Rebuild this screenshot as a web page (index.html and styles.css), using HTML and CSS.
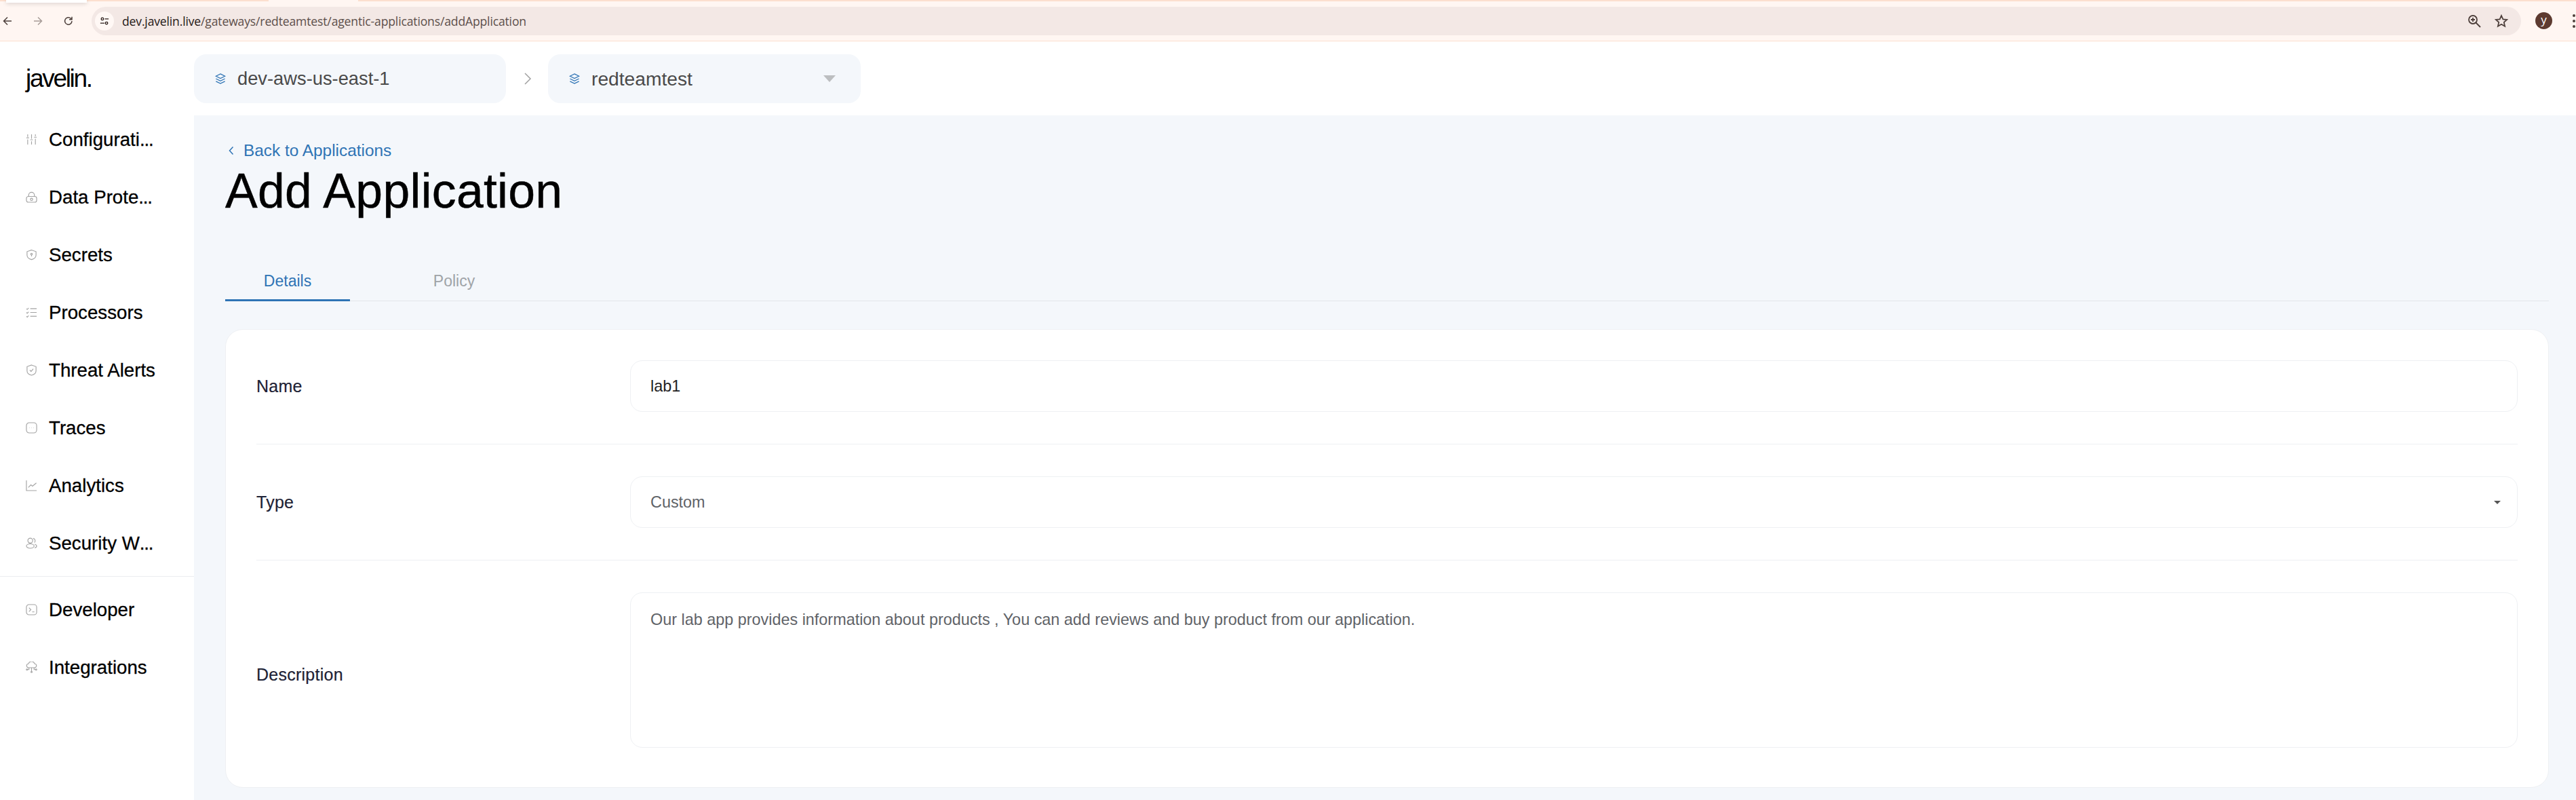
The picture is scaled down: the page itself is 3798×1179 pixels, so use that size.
FILE: index.html
```html
<!DOCTYPE html>
<html lang="en">
<head>
<meta charset="utf-8">
<title>Add Application</title>
<link rel="stylesheet" href="styles.css">
</head>
<body>
<div class="page">
  <div class="tabstrip"><div class="tab-active"></div><div class="tab-gap"></div></div>
  <header class="toolbar">
    <svg class="tb-icon" viewBox="0 0 16 16"><path d="M14 8H2.500M8 2.500 2.500 8 8 13.500"/></svg>
    <svg class="tb-icon tb-off" viewBox="0 0 16 16"><path d="M2 8h11.500M8 2.500 13.500 8 8 13.500"/></svg>
    <svg class="tb-icon" viewBox="0 0 16 16"><path d="M13 8a5.200 5.200 0 1 1-1.600-3.800L13 5.800M13 1.800v4H9"/></svg>
    <div class="omnibox">
      <span class="site-info"><svg viewBox="0 0 16 16"><circle cx="4.500" cy="4.500" r="2"/><circle cx="11.500" cy="11.500" r="2"/><path d="M8.500 4.500H15M1 11.500h7"/></svg></span>
      <span class="url"><span class="url-host">dev.javelin.live</span>/gateways/redteamtest/agentic-applications/addApplication</span>
      <svg class="omni-icon" viewBox="0 0 20 20"><circle cx="8" cy="8" r="6"/><path d="M12.500 12.500 19 19M5 8h6M8 5v6"/></svg>
      <svg class="omni-icon" viewBox="0 0 20 20"><path d="m10 2 2.400 5.400 5.800.6-4.400 3.900 1.300 5.800L10 14.700l-5.100 3 1.300-5.800L1.800 8l5.800-.6z"/></svg>
    </div>
    <span class="avatar">y</span>
    <span class="kebab"><i></i><i></i><i></i></span>
  </header>
  <div class="layout">
    <aside class="sidebar">
      <div class="logo">javelin.</div>
      <nav class="nav">
        <a class="nav-item"><svg viewBox="0 0 18 18"><path d="M3 1v4M3 9v8M9 1v7M9 12v5M15 1v3M15 8v9M1 6.500h4M7 9.500h4M13 5.500h4"/></svg><span>Configurati<span class="dots">...</span></span></a>
        <a class="nav-item"><svg viewBox="0 0 18 18"><rect x="1" y="8" width="16" height="9" rx="3"/><path d="M4.500 8V6a4.500 4.500 0 0 1 9 0v2"/><circle cx="9" cy="12.500" r="1.800"/></svg><span>Data Prote<span class="dots">...</span></span></a>
        <a class="nav-item"><svg viewBox="0 0 18 18"><path d="M9 1.500 16 4v5.500c0 3.500-3 6-7 7-4-1-7-3.500-7-7V4z"/><circle cx="9" cy="8" r="1.300"/><path d="M9 9.500v2"/></svg><span>Secrets</span></a>
        <a class="nav-item"><svg viewBox="0 0 18 18"><path d="M7 3h10M7 9h10M7 15h10M1 3l1.300 1.300L4.500 2M1 9l1.300 1.300L4.500 8M1 15l1.300 1.300L4.500 14"/></svg><span>Processors</span></a>
        <a class="nav-item"><svg viewBox="0 0 18 18"><path d="M9 1 16 3.500V10c0 3.500-3 6-7 7-4-1-7-3.500-7-7V3.500z"/><path d="m6.300 9 2 2 3.400-4"/></svg><span>Threat Alerts</span></a>
        <a class="nav-item"><svg viewBox="0 0 18 18"><rect x="1" y="1" width="16" height="16" rx="4.500"/><path d="M5.800 9h.4M8.800 9h.4M11.800 9h.4"/></svg><span>Traces</span></a>
        <a class="nav-item"><svg viewBox="0 0 18 18"><path d="M1 1v16h16M4 12l4-4 2.500 2 6-5"/></svg><span>Analytics</span></a>
        <a class="nav-item"><svg viewBox="0 0 18 18"><circle cx="7" cy="5" r="3.800"/><ellipse cx="7" cy="13.500" rx="6" ry="3.500"/><path d="M11.500 1.500a3.800 3.800 0 0 1 2 6.500M14 10.500c2 .7 3 1.800 3 3s-1 2.300-3 3"/></svg><span>Security W<span class="dots">...</span></span></a>
      </nav>
      <nav class="nav nav-lower">
        <a class="nav-item"><svg viewBox="0 0 18 18"><rect x="1" y="1" width="16" height="16" rx="4"/><path d="m5 6 3 3-3 3M10 12.500h3.500"/></svg><span>Developer</span></a>
        <a class="nav-item"><svg viewBox="0 0 18 18"><path d="M5 9.500h-.5a3 3 0 0 1-.3-6 5 5 0 0 1 9.600 0 3 3 0 0 1-.3 6H5zM9 9.500v6M5 9.500v3H2.500M13 9.500v3h2.500"/><circle cx="1.800" cy="12.500" r="1"/><circle cx="16.200" cy="12.500" r="1"/><circle cx="9" cy="16.200" r="1"/></svg><span>Integrations</span></a>
      </nav>
    </aside>
    <div class="right">
      <div class="topbar">
        <div class="crumb">
          <svg class="stack" viewBox="0 0 16 18"><path d="M8 1 15 4.500 8 8 1 4.500zM1 8.500 8 12l7-3.500M1 12.500 8 16l7-3.500"/></svg>
          <span class="crumb-name">dev-aws-us-east-1</span>
        </div>
        <svg class="crumb-sep" viewBox="0 0 12 18"><path d="m2 1 8 8-8 8"/></svg>
        <div class="crumb crumb-active">
          <svg class="stack" viewBox="0 0 16 18"><path d="M8 1 15 4.500 8 8 1 4.500zM1 8.500 8 12l7-3.500M1 12.500 8 16l7-3.500"/></svg>
          <span class="crumb-name">redteamtest</span>
          <span class="crumb-caret"></span>
        </div>
      </div>
      <main class="content">
        <a class="back"><svg viewBox="0 0 8 14"><path d="M6.500 1.500 1.500 7l5 5.500"/></svg>Back to Applications</a>
        <h1 class="title">Add Application</h1>
        <div class="tabs">
          <div class="tab tab-on">Details</div>
          <div class="tab tab-policy">Policy</div>
        </div>
        <section class="card">
          <div class="row">
            <div class="label">Name</div>
            <div class="field field-value">lab1</div>
          </div>
          <div class="row">
            <div class="label">Type</div>
            <div class="field field-select">Custom<span class="select-caret"></span></div>
          </div>
          <div class="row row-last">
            <div class="label">Description</div>
            <div class="field field-area">Our lab app provides information about products , You can add reviews and buy product from our application.</div>
          </div>
        </section>
      </main>
    </div>
  </div>
</div>
</body>
</html>
```
FILE: styles.css
```css
* { box-sizing: border-box; }
html, body { margin: 0; padding: 0; background: #fff; }
body { font-family: "Liberation Sans", Arial, sans-serif; color: #000; }
.page { width: 3798px; height: 1179px; overflow: hidden; display: flex; flex-direction: column; }

.tabstrip { height: 2px; background: #fcdfcf; display: flex; flex: none; }
.tab-active { width: 119px; margin-left: 9px; height: 4px; background: #fff; box-shadow: 0 1px 6px rgba(0,0,0,.2); position: relative; z-index: 2; }
.tab-gap { width: 132px; margin-left: 268px; background: #fff6f2; }

.toolbar { height: 59px; flex: none; background: #fff6f2; border-bottom: 1px solid #fcdfcf; display: flex; align-items: center; padding: 0 0 1px 3px; }
.tb-icon { width: 16px; height: 16px; margin-right: 29px; fill: none; stroke: #4d3f3b; stroke-width: 1.5; flex: none; }
.tb-off { stroke: #a89c98; }
.omnibox { width: 3582px; height: 42px; margin-left: -3px; border-radius: 21px; background: #f3e8e5; display: flex; align-items: center; padding-right: 19px; flex: none; }
.site-info { width: 28px; height: 28px; margin-left: 5px; border-radius: 50%; background: #fff8f5; display: flex; align-items: center; justify-content: center; flex: none; }
.site-info svg { width: 14px; height: 14px; fill: none; stroke: #2a1d1a; stroke-width: 1.5; }
.url { margin-left: 12px; flex: 1; font: 17.6px "Open Sans", sans-serif; color: #5d4f4b; letter-spacing: -.17px; white-space: nowrap; }
.url-host { color: #241815; }
.omni-icon { width: 20px; height: 20px; margin-left: 20px; fill: none; stroke: #4d3f3b; stroke-width: 1.8; flex: none; }
.avatar { width: 25px; height: 25px; margin-left: 21px; border-radius: 50%; background: #5d3a30; color: #fff; font: 17px/21px "Open Sans", sans-serif; text-align: center; flex: none; }
.kebab { margin-left: 30px; display: flex; flex-direction: column; gap: 4px; flex: none; }
.kebab i { width: 4px; height: 4px; border-radius: 50%; background: #4d3f3b; display: block; }

.layout { flex: 1; min-height: 0; display: grid; grid-template-columns: 286px 1fr; }
.sidebar { background: #fff; }
.logo { height: 102px; padding: 34px 0 0 38px; font-size: 37px; line-height: 42px; letter-spacing: -2.3px; color: #000; }
.nav-item { height: 85px; padding-left: 38px; display: flex; align-items: center; gap: 17px; font-size: 27.7px; color: #000; white-space: nowrap; -webkit-text-stroke: .3px #000; }
.nav-item svg { width: 17px; height: 17px; fill: none; stroke: #a3a3a3; stroke-width: 1.2; flex: none; }
.dots { letter-spacing: -1.2px; }
.nav-lower { margin-top: 6px; padding-top: 6px; border-top: 1px solid #ecedf0; }

.right { display: flex; flex-direction: column; min-width: 0; }
.topbar { height: 109px; flex: none; background: #fff; display: flex; align-items: center; padding: 19px 0 18px; }
.crumb { width: 460px; height: 72px; background: #f4f7fb; border-radius: 18px; display: flex; align-items: center; padding-left: 31px; gap: 17px; font-size: 27.3px; color: #4a4a4a; flex: none; }
.crumb-active { width: 461px; font-size: 28.2px; }
.crumb-name { flex: 1; }
.stack { width: 16px; height: 17px; fill: none; stroke: #2f74b5; stroke-width: 1.4; flex: none; }
.crumb-sep { width: 12px; height: 18px; margin: 0 24px 0 26px; fill: none; stroke: #a0a0a0; stroke-width: 1.5; flex: none; }
.crumb-caret { width: 0; height: 0; margin-right: 37px; border-left: 9.5px solid transparent; border-right: 9.5px solid transparent; border-top: 10px solid #bcbec0; }

.content { flex: 1; min-height: 0; background: #f4f7fb; padding: 36px 40px 0 46px; }
.back { display: flex; align-items: center; gap: 14px; height: 32px; padding-left: 5px; font-size: 24.4px; color: #2f74b5; }
.back svg { width: 8px; height: 14px; fill: none; stroke: #2f74b5; stroke-width: 1.5; flex: none; }
.title { margin: 1px 0 0; height: 84px; font-size: 71.5px; line-height: 84px; font-weight: 400; letter-spacing: .3px; color: #000; -webkit-text-stroke: .5px #000; }
.tabs { margin-top: 68px; height: 53px; border-bottom: 1px solid #e3e6ea; display: flex; }
.tab { width: 184px; height: 53px; padding-top: 8px; text-align: center; font-size: 23px; line-height: 30px; }
.tab-on { color: #2f74b5; border-bottom: 3px solid #2f74b5; }
.tab-policy { width: 307px; color: #a0a4a8; }

.card { margin-top: 41px; height: 676px; background: #fff; border: 1px solid #eef0f3; border-radius: 26px; padding: 45px 45px 0; }
.row { display: grid; grid-template-columns: 551px 1fr; align-items: center; padding-bottom: 47px; margin-bottom: 47px; border-bottom: 1px solid #eef0f3; }
.row-last { padding-bottom: 0; margin-bottom: 0; border-bottom: 0; }
.row-last .label { padding-top: 13px; }
.label { font-size: 25px; letter-spacing: .25px; color: #1e2235; -webkit-text-stroke: .2px #1e2235; }
.field { height: 76px; border: 1px solid #eef0f3; border-radius: 18px; padding: 0 29px; display: flex; align-items: center; font-size: 23.4px; color: #5f6368; }
.field-value { color: #222; }
.field-select { justify-content: space-between; }
.select-caret { width: 0; height: 0; margin-right: -5px; border-left: 5px solid transparent; border-right: 5px solid transparent; border-top: 5px solid #555; }
.field-area { height: 229px; align-items: flex-start; padding-top: 23px; line-height: 32px; }
```
